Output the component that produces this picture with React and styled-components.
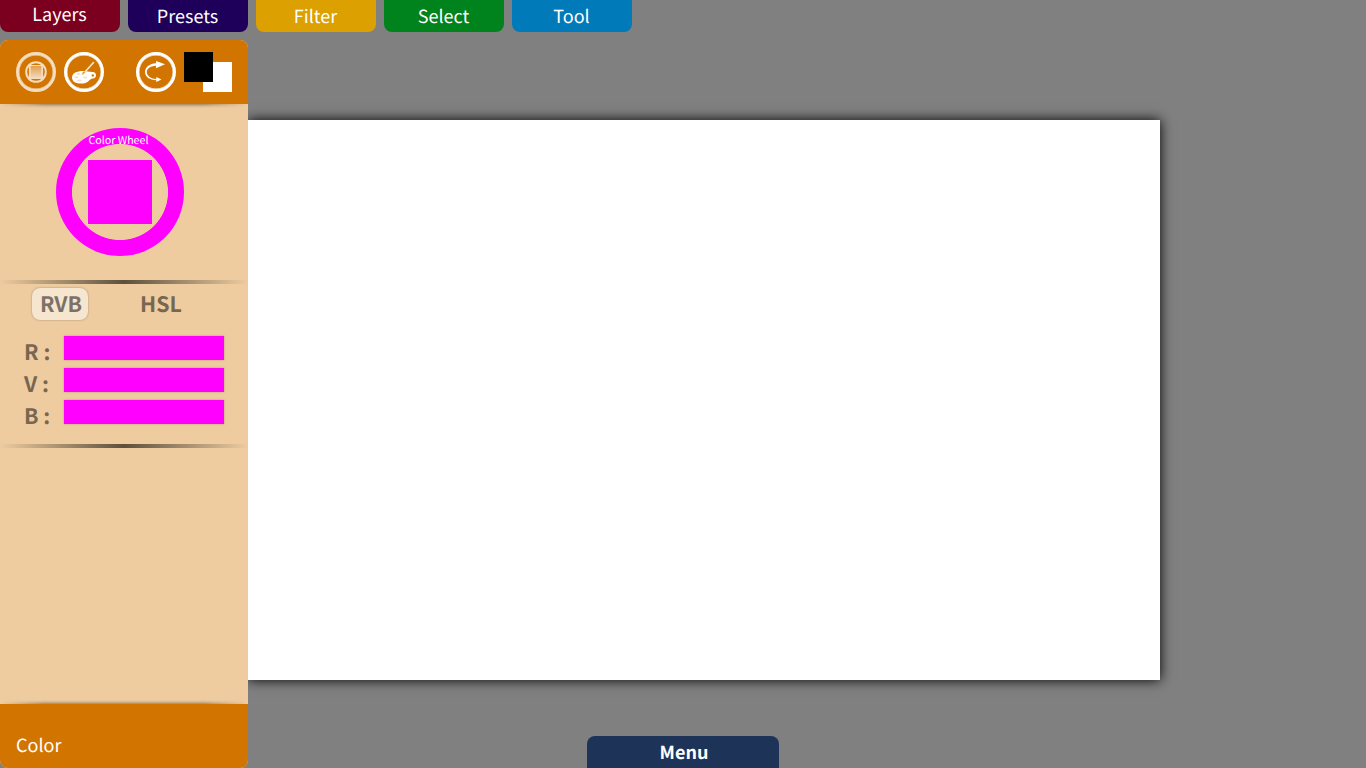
import React from 'react';
import styled, { createGlobalStyle } from 'styled-components';

const GlobalStyle = createGlobalStyle`
  * { box-sizing: border-box; }
  body {
    margin: 0;
    background: #808080;
    font-family: "Noto Sans CJK SC", "Noto Sans", sans-serif;
    text-rendering: geometricPrecision;
    overflow: hidden;
  }
  button { text-rendering: inherit; }
`;

const App = styled.div`
  display: grid;
  grid-template: 40px 728px / 248px 1fr;
  width: 1366px;
  height: 768px;
  overflow: hidden;
`;

const TabBar = styled.nav`
  grid-column: 1 / -1;
  display: flex;
  gap: 8px;
`;

const Tab = styled.button`
  width: 120px;
  height: 32px;
  padding: 0 1px ${p => (p.$raised ? 4 : 0)}px 0;
  border: 0;
  border-radius: 0 0 8px 8px;
  background: ${p => p.$color};
  color: #fff;
  font: 400 18px "Noto Sans CJK SC", sans-serif;
  line-height: ${p => (p.$raised ? 28 : 32)}px;
`;

const Panel = styled.aside`
  position: relative;
  z-index: 1;
  display: flex;
  flex-direction: column;
  border-radius: 8px;
  overflow: hidden;
  background: #eecca0;
`;

const PanelHeader = styled.header`
  display: flex;
  align-items: center;
  flex: 0 0 64px;
  padding: 0 16px;
  background: #d27500;
  gap: 8px;
`;

const RoundButton = styled.button`
  width: 40px;
  height: 40px;
  padding: 0;
  border: 3px solid #fff;
  border-radius: 50%;
  background: transparent;
  box-shadow: inset 0 0 0 0.4px #fff;
  opacity: ${p => (p.$active ? 0.75 : 1)};
  margin-left: ${p => (p.$pushed ? 24 : 0)}px;

  svg { display: block; }
`;

const Swatches = styled.div`
  display: grid;
  grid-template: 10px 20px 10px / 19px 10px 19px;
  width: 48px;
  height: 40px;
`;

const Swatch = styled.span`
  grid-area: ${p => p.$area};
  background: ${p => p.$color};
`;

const PanelBody = styled.section`
  flex: 1;
  display: flex;
  flex-direction: column;
`;

const Shade = styled.div`
  height: 4px;
  background: linear-gradient(${p => (p.$up ? '0deg' : '180deg')}, rgba(60, 45, 25, 0.42), rgba(60, 45, 25, 0.14) 50%, transparent);
  mask-image: linear-gradient(90deg, transparent, #000 18%, #000 82%, transparent);
`;

const Wheel = styled.div`
  display: flex;
  flex-direction: column;
  align-items: center;
  width: 128px;
  height: 128px;
  margin: 20px 0 24px 56px;
  border-radius: 50%;
  background: radial-gradient(circle, transparent 47.6px, #f0f 48.4px);
`;

const WheelLabel = styled.span`
  height: 32px;
  padding-right: 3px;
  color: #fff;
  font-size: 10.67px;
  line-height: 26px;
  white-space: nowrap;
`;

const WheelSquare = styled.div`
  width: 64px;
  height: 64px;
  background: #f0f;
`;

const Divider = styled.div`
  height: 4px;
  background: linear-gradient(90deg, rgba(92, 80, 61, 0) 0, #5c503d 50%, rgba(92, 80, 61, 0) 100%);
`;

const Modes = styled.div`
  display: flex;
  gap: 44px;
  padding: 4px 32px 0;
  height: 52px;
`;

const Mode = styled.button`
  width: 56px;
  height: 32px;
  padding: 0 0 0 2px;
  border: 0;
  border-radius: 8px;
  background: ${p => (p.$active ? '#f6e5cf' : 'transparent')};
  box-shadow: ${p => (p.$active ? '0 0 2px rgba(80, 75, 65, 0.55)' : 'none')};
  color: ${p => (p.$active ? '#7b7267' : '#776650')};
  font: 700 21.33px/32px "Noto Sans CJK SC", sans-serif;
`;

const Sliders = styled.div`
  display: flex;
  flex-direction: column;
  gap: 8px;
  padding: 0 24px 20px;
`;

const SliderRow = styled.label`
  display: flex;
  height: 24px;
`;

const SliderName = styled.span`
  width: 40px;
  color: #776650;
  font-size: 21.33px;
  font-weight: 700;
  line-height: 32px;
`;

const SliderTrack = styled.span`
  width: 160px;
  background: #f0f;
  box-shadow: 0 0 2px rgba(80, 75, 65, 0.4);
`;

const PanelFooter = styled.footer`
  flex: 0 0 64px;
  padding: 25px 16px 0;
  background: #d27500;
  color: #fff;
  font-size: 18px;
  line-height: 32px;
`;

const Workspace = styled.main`
  display: grid;
  grid-template-rows: 560px 32px;
  row-gap: 56px;
  padding-top: 80px;
`;

const Canvas = styled.div`
  width: 912px;
  background: #fff;
  box-shadow: 0 0 12px #000;
`;

const MenuButton = styled.button`
  width: 192px;
  margin-left: 339px;
  padding: 0 0 0 2px;
  border: 0;
  border-radius: 8px 8px 0 0;
  background: #1e3358;
  color: #fff;
  font: 700 18px/32px "Noto Sans CJK SC", sans-serif;
`;

const Spacer = styled.div`flex: 1;`;

const WheelIcon = () => (
  <svg width="34" height="34" viewBox="0 0 34 34" fill="none">
    <defs>
      <linearGradient id="fade" x2="0" y2="1">
        <stop stopColor="#fff" stopOpacity=".4" />
        <stop offset="1" stopColor="#fff" />
      </linearGradient>
    </defs>
    <circle cx="17" cy="17" r="9.8" stroke="#fff" strokeWidth="2" />
    <rect x="11" y="10.5" width="12" height="13" fill="url(#fade)" />
    <path d="M10.8 10v14M23.2 10v14" stroke="#fff" strokeWidth="1.8" />
    <path d="M10 10.5h14M10 23.5h14" stroke="#fff" strokeWidth="1.2" />
  </svg>
);

const PaletteIcon = () => (
  <svg width="34" height="34" viewBox="0 0 34 34">
    <path fill="#fff" fillRule="evenodd" d="M5 22.4C5 18.2 10 16 16 16C20 16 22 17 25.5 17C28 17 29 18.5 29 20.4C29 22.9 27 23.4 24.5 23.8C22.5 24.6 21 28.6 14.5 28.6C8.5 28.6 5 26.2 5 22.4ZM24.6 20.4a1.2 1.2 0 1 0 2.4 0a1.2 1.2 0 1 0-2.4 0Z" />
    <g fill="#f8e1c3">
      <ellipse cx="11.7" cy="19" rx="2.2" ry="1" />
      <ellipse cx="9.5" cy="22.3" rx="2.1" ry="1.1" />
      <ellipse cx="18" cy="22.5" rx="2.1" ry="1.1" />
      <ellipse cx="12.3" cy="25.5" rx="2.3" ry="1.1" />
    </g>
    <path d="M17.5 17.5L26.5 7.5" stroke="#fbe9d2" strokeWidth="1.6" strokeLinecap="round" />
    <path d="M15 20.2L15.7 17L17.6 16.2L18 17.8Z" fill="#e09a45" />
  </svg>
);

const SwapIcon = () => (
  <svg width="34" height="34" viewBox="0 0 34 34">
    <path fill="#fff" d="M17 6L26 9.3L17 13.2V10.8C11 11 7.8 14 7.8 17C7.8 21 12 23.8 17.3 24V22L22.5 24.5L17.3 27V25.2C11 25 6 22 6 17C6 12.5 10.5 8.5 17 8.3Z" />
  </svg>
);

const tabs = [
  { name: 'Layers', color: '#7b0020', raised: true },
  { name: 'Presets', color: '#1e005a' },
  { name: 'Filter', color: '#dca000' },
  { name: 'Select', color: '#00831c' },
  { name: 'Tool', color: '#007ab8' },
];

export default function PaintApp() {
  return (
    <>
      <GlobalStyle />
      <App>
        <TabBar>
          {tabs.map(t => (
            <Tab key={t.name} $color={t.color} $raised={t.raised}>{t.name}</Tab>
          ))}
        </TabBar>
        <Panel>
          <PanelHeader>
            <RoundButton $active><WheelIcon /></RoundButton>
            <RoundButton><PaletteIcon /></RoundButton>
            <RoundButton $pushed><SwapIcon /></RoundButton>
            <Swatches>
              <Swatch $area="2 / 2 / 4 / 4" $color="#fff" />
              <Swatch $area="1 / 1 / 3 / 3" $color="#000" />
            </Swatches>
          </PanelHeader>
          <PanelBody>
            <Shade />
            <Wheel>
              <WheelLabel>Color Wheel</WheelLabel>
              <WheelSquare />
            </Wheel>
            <Divider />
            <Modes>
              <Mode $active>RVB</Mode>
              <Mode>HSL</Mode>
            </Modes>
            <Sliders>
              {['R', 'V', 'B'].map(name => (
                <SliderRow key={name}>
                  <SliderName>{name} :</SliderName>
                  <SliderTrack />
                </SliderRow>
              ))}
            </Sliders>
            <Divider />
            <Spacer />
            <Shade $up />
          </PanelBody>
          <PanelFooter>Color</PanelFooter>
        </Panel>
        <Workspace>
          <Canvas />
          <MenuButton>Menu</MenuButton>
        </Workspace>
      </App>
    </>
  );
}
